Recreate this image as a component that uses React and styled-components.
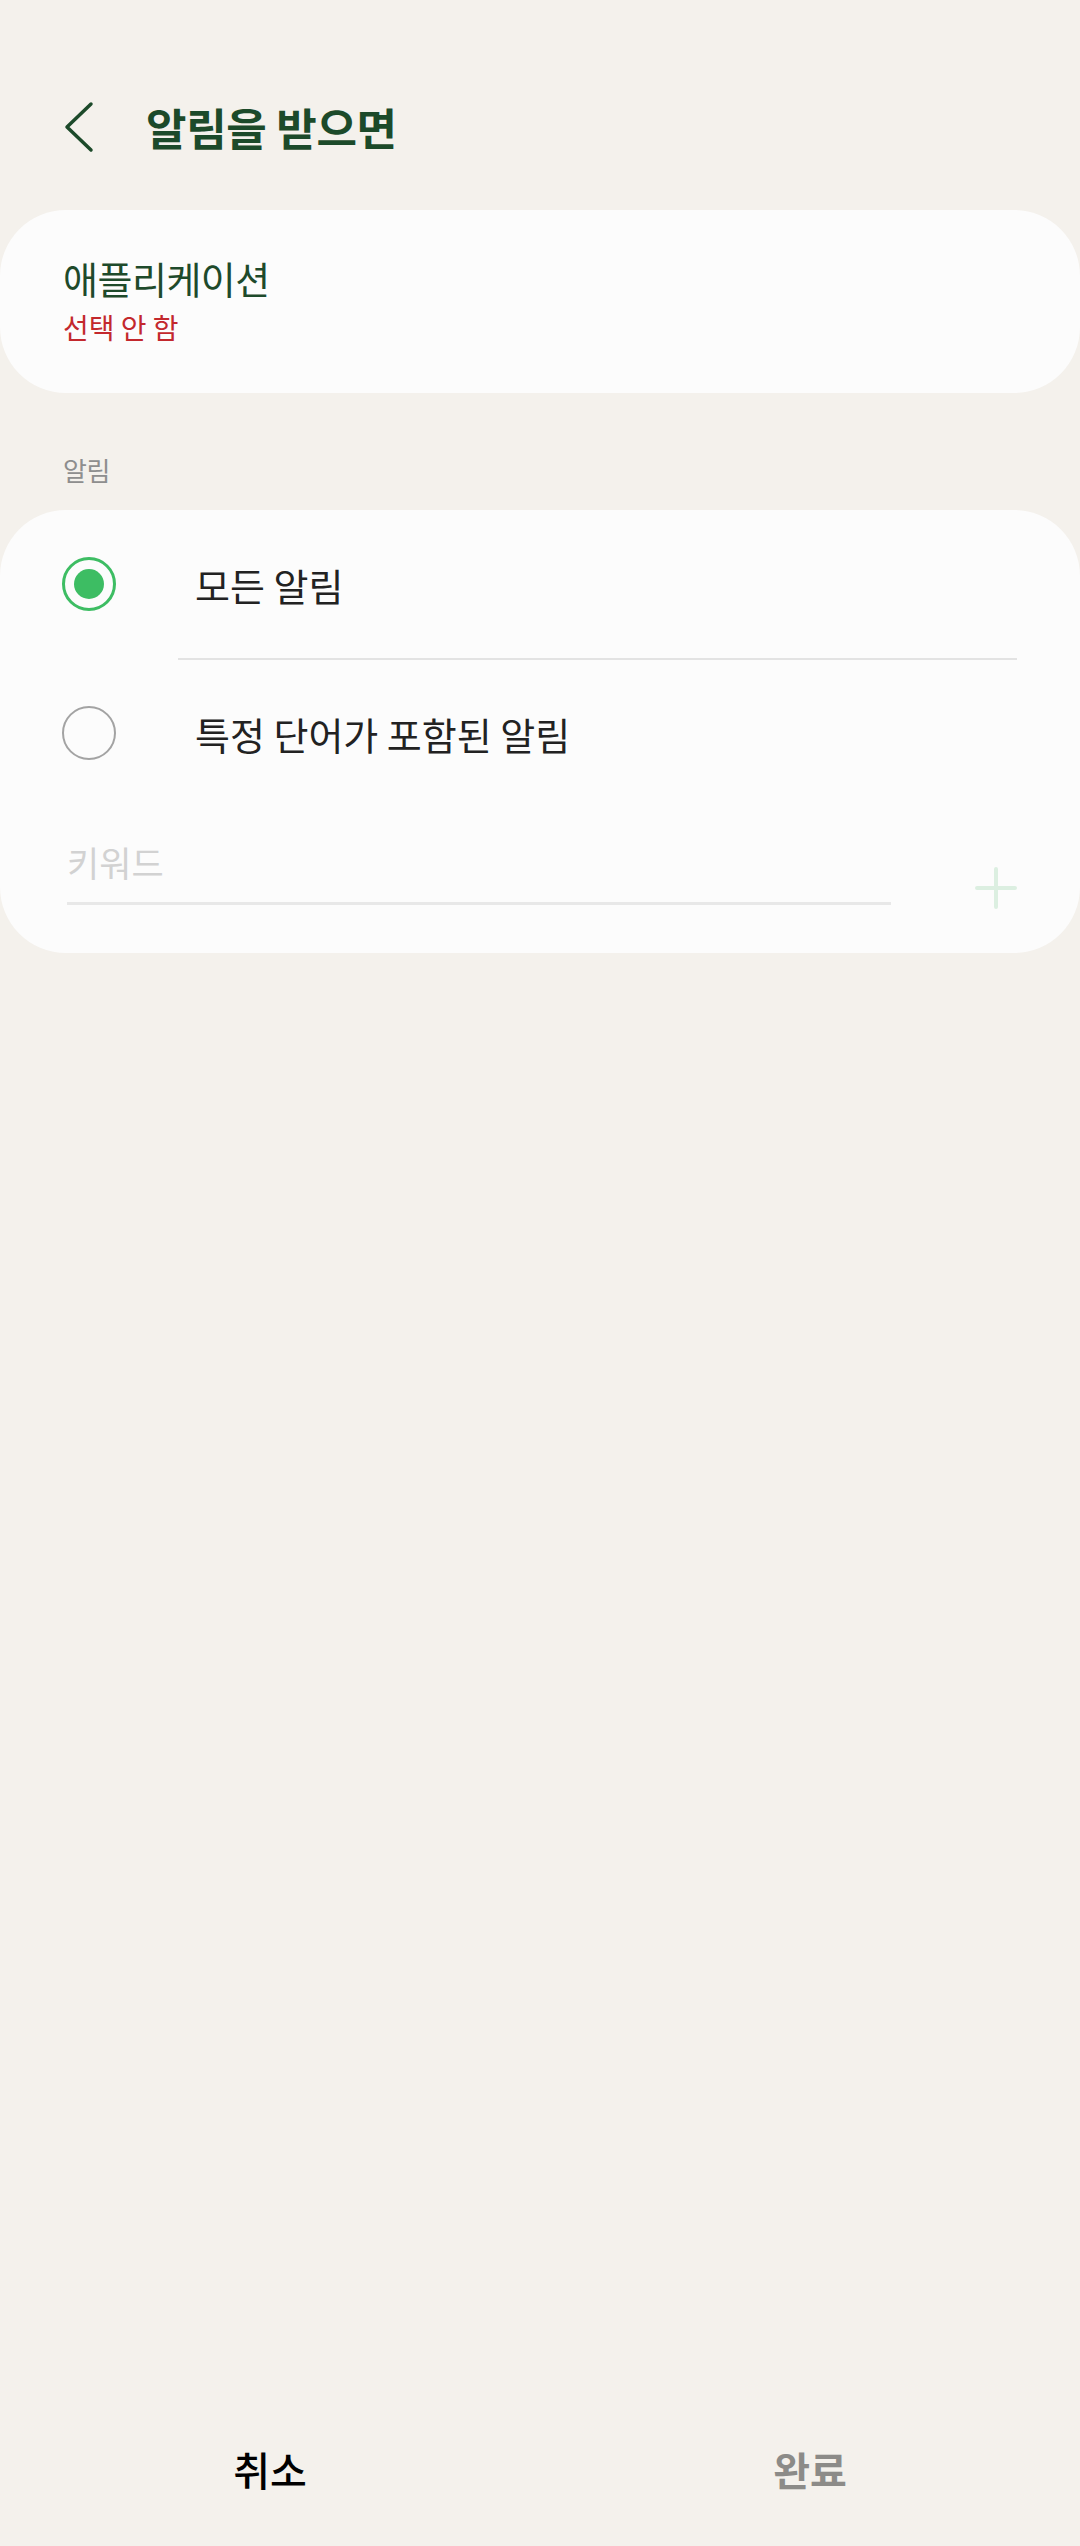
import React from "react";
import styled, { createGlobalStyle } from "styled-components";

const Global = createGlobalStyle`
  html, body { margin: 0; padding: 0; background: #f4f1ec; }
  body { font-family: "Noto Sans CJK KR", "Noto Sans", sans-serif; }
  * { box-sizing: border-box; }
`;

const Page = styled.div`
  width: 1080px;
  min-height: 2546px;
  display: flex;
  flex-direction: column;
  background: #f4f1ec;
`;

const Header = styled.header`
  height: 210px;
  padding: 44px 0 0 63px;
  display: flex;
  align-items: center;
`;

const BackButton = styled.button`
  width: 32px;
  height: 52px;
  padding: 0;
  border: none;
  background: none;
  display: flex;
  align-items: center;
  justify-content: center;
`;

const Title = styled.h1`
  margin: 0 0 0 51px;
  font-size: 44px;
  font-weight: 700;
  letter-spacing: -0.3px;
  color: #1c4a2a;
  line-height: 1;
`;

const Card = styled.section`
  background: #fcfcfc;
  border-radius: 66px;
  display: flex;
  flex-direction: column;
`;

const AppCard = styled(Card)`
  height: 183px;
  padding: 0 0 6px 63px;
  justify-content: center;
  gap: 10px;
`;

const AppTitle = styled.div`
  font-size: 38px;
  letter-spacing: -0.5px;
  color: #1e4a2b;
  line-height: 46px;
`;

const AppSub = styled.div`
  font-size: 28px;
  color: #c3282d;
  line-height: 32px;
`;

const SectionLabel = styled.div`
  height: 117px;
  padding: 59px 0 0 63px;
  font-size: 26px;
  letter-spacing: -0.5px;
  line-height: 36px;
  color: #8e8e8e;
`;

const OptionRow = styled.label`
  height: ${(p) => p.$h}px;
  padding-left: 62px;
  display: flex;
  align-items: center;
  gap: 79px;
  cursor: pointer;
`;

const Radio = styled.span`
  width: 54px;
  height: 54px;
  flex: none;
  border-radius: 50%;
  border: ${(p) => (p.$checked ? "3px solid #3dbd63" : "2.5px solid #a3a3a3")};
  display: flex;
  align-items: center;
  justify-content: center;
  &::after {
    content: "";
    display: ${(p) => (p.$checked ? "block" : "none")};
    width: 30px;
    height: 30px;
    border-radius: 50%;
    background: #3dbd63;
  }
`;

const OptionText = styled.span`
  font-size: 38px;
  color: #222;
  line-height: 46px;
  padding-top: 2px;
`;

const Divider = styled.hr`
  margin: 0 63px 0 178px;
  border: none;
  height: 2px;
  background: #e3e3e3;
`;

const KeywordRow = styled.div`
  height: 147px;
  padding: 0 63px 0 67px;
  display: flex;
  align-items: flex-start;
`;

const KeywordField = styled.div`
  width: 824px;
  margin-top: 33px;
  padding-bottom: 17px;
  border-bottom: 3px solid #e8e8e8;
  font-size: 35px;
  line-height: 46px;
  color: #d2d2d2;
`;

const PlusButton = styled.span`
  margin: 61px 0 0 84px;
  width: 42px;
  height: 42px;
  display: flex;
`;

const Spacer = styled.div`
  flex: 1;
`;

const BottomBar = styled.footer`
  height: 152px;
  display: flex;
`;

const BarButton = styled.button`
  flex: 1;
  border: none;
  background: none;
  font-family: inherit;
  font-size: 40px;
  font-weight: ${(p) => (p.$muted ? 700 : 500)};
  color: ${(p) => (p.$muted ? "#8c8b88" : "#000")};
  padding: 0 0 2px;
`;

export default function App() {
  return (
    <Page>
      <Global />
      <Header>
        <BackButton aria-label="뒤로">
          <svg width="32" height="52" viewBox="0 0 32 52">
            <path
              d="M28 3 L4 26 L28 49"
              fill="none"
              stroke="#1c4a2a"
              strokeWidth="3.5"
              strokeLinecap="round"
              strokeLinejoin="round"
            />
          </svg>
        </BackButton>
        <Title>알림을 받으면</Title>
      </Header>

      <AppCard>
        <AppTitle>애플리케이션</AppTitle>
        <AppSub>선택 안 함</AppSub>
      </AppCard>

      <SectionLabel>알림</SectionLabel>

      <Card>
        <OptionRow $h={148}>
          <Radio $checked />
          <OptionText>모든 알림</OptionText>
        </OptionRow>
        <Divider />
        <OptionRow $h={146}>
          <Radio />
          <OptionText>특정 단어가 포함된 알림</OptionText>
        </OptionRow>
        <KeywordRow>
          <KeywordField>키워드</KeywordField>
          <PlusButton>
            <svg width="42" height="42" viewBox="0 0 42 42">
              <path
                d="M21 2 V40 M2 21 H40"
                stroke="#dcefe1"
                strokeWidth="4"
                strokeLinecap="round"
              />
            </svg>
          </PlusButton>
        </KeywordRow>
      </Card>

      <Spacer />

      <BottomBar>
        <BarButton>취소</BarButton>
        <BarButton $muted>완료</BarButton>
      </BottomBar>
    </Page>
  );
}
